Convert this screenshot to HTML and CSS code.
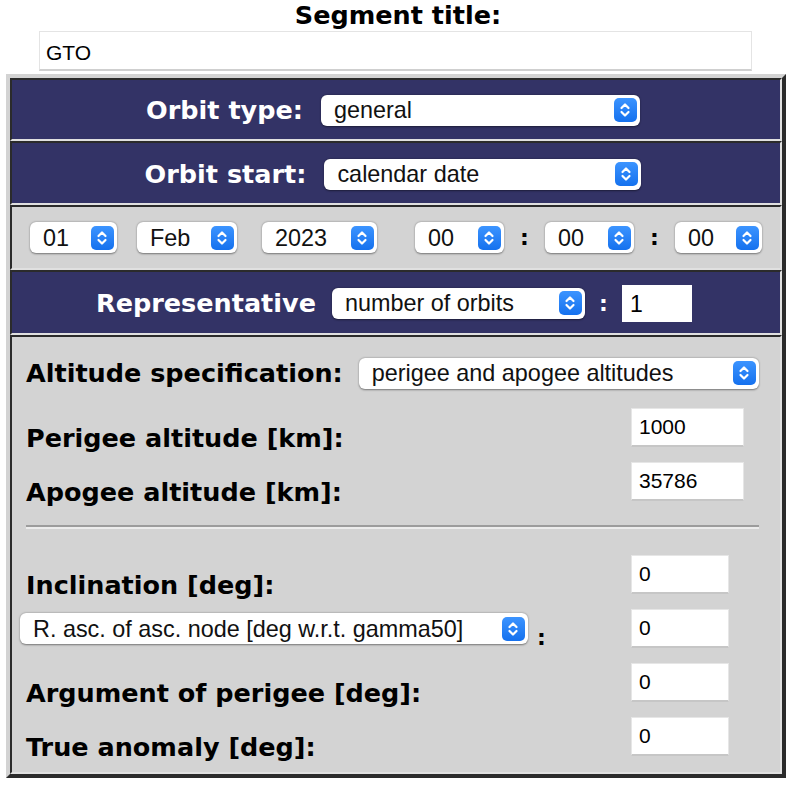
FILE: index.html
```html
<!DOCTYPE html>
<html>
<head>
<meta charset="utf-8">
<link rel="stylesheet" href="styles.css">
</head>
<body>
<div class="title">Segment title:</div>
<div class="title-input">GTO</div>
<div class="panel">
  <div class="cell navy row1">
    <span class="wlabel">Orbit type:</span>
    <div class="sel w-type"><span>general</span><span class="btn"><svg viewBox="0 0 22 24" width="22" height="24"><path d="M7.5 10 L11 6.5 L14.5 10 M7.5 14 L11 17.5 L14.5 14"/></svg></span></div>
  </div>
  <div class="cell navy row2">
    <span class="wlabel">Orbit start:</span>
    <div class="sel w-start"><span>calendar date</span><span class="btn"><svg viewBox="0 0 22 24" width="22" height="24"><path d="M7.5 10 L11 6.5 L14.5 10 M7.5 14 L11 17.5 L14.5 14"/></svg></span></div>
  </div>
  <div class="cell gray row3">
    <div class="sel w-day"><span>01</span><span class="btn"><svg viewBox="0 0 22 24" width="22" height="24"><path d="M7.5 10 L11 6.5 L14.5 10 M7.5 14 L11 17.5 L14.5 14"/></svg></span></div>
    <div class="sel w-mon"><span>Feb</span><span class="btn"><svg viewBox="0 0 22 24" width="22" height="24"><path d="M7.5 10 L11 6.5 L14.5 10 M7.5 14 L11 17.5 L14.5 14"/></svg></span></div>
    <div class="sel w-year"><span>2023</span><span class="btn"><svg viewBox="0 0 22 24" width="22" height="24"><path d="M7.5 10 L11 6.5 L14.5 10 M7.5 14 L11 17.5 L14.5 14"/></svg></span></div>
    <div class="sel w-hh"><span>00</span><span class="btn"><svg viewBox="0 0 22 24" width="22" height="24"><path d="M7.5 10 L11 6.5 L14.5 10 M7.5 14 L11 17.5 L14.5 14"/></svg></span></div>
    <span class="colon">:</span>
    <div class="sel w-mm"><span>00</span><span class="btn"><svg viewBox="0 0 22 24" width="22" height="24"><path d="M7.5 10 L11 6.5 L14.5 10 M7.5 14 L11 17.5 L14.5 14"/></svg></span></div>
    <span class="colon">:</span>
    <div class="sel w-ss"><span>00</span><span class="btn"><svg viewBox="0 0 22 24" width="22" height="24"><path d="M7.5 10 L11 6.5 L14.5 10 M7.5 14 L11 17.5 L14.5 14"/></svg></span></div>
  </div>
  <div class="cell navy row4">
    <span class="wlabel">Representative</span>
    <div class="sel w-rep"><span>number of orbits</span><span class="btn"><svg viewBox="0 0 22 24" width="22" height="24"><path d="M7.5 10 L11 6.5 L14.5 10 M7.5 14 L11 17.5 L14.5 14"/></svg></span></div>
    <span class="colon wcolon">:</span>
    <div class="rep-input">1</div>
  </div>
  <div class="cell gray row5">
    <div class="spec-row">
      <span class="blabel">Altitude specification:</span>
      <div class="sel w-spec"><span>perigee and apogee altitudes</span><span class="btn"><svg viewBox="0 0 22 24" width="22" height="24"><path d="M7.5 10 L11 6.5 L14.5 10 M7.5 14 L11 17.5 L14.5 14"/></svg></span></div>
    </div>
    <div class="frow first">
      <span class="blabel">Perigee altitude [km]:</span>
      <div class="num wide">1000</div>
    </div>
    <div class="frow">
      <span class="blabel">Apogee altitude [km]:</span>
      <div class="num wide">35786</div>
    </div>
    <div class="rule"></div>
    <div class="frow after-rule">
      <span class="blabel">Inclination [deg]:</span>
      <div class="num">0</div>
    </div>
    <div class="frow raan">
      <div class="raan-sel">
        <div class="sel w-raan"><span>R. asc. of asc. node [deg w.r.t. gamma50]</span><span class="btn"><svg viewBox="0 0 22 24" width="22" height="24"><path d="M7.5 10 L11 6.5 L14.5 10 M7.5 14 L11 17.5 L14.5 14"/></svg></span></div>
        <span class="bcolon">:</span>
      </div>
      <div class="num">0</div>
    </div>
    <div class="frow">
      <span class="blabel">Argument of perigee [deg]:</span>
      <div class="num">0</div>
    </div>
    <div class="frow">
      <span class="blabel">True anomaly [deg]:</span>
      <div class="num">0</div>
    </div>
  </div>
</div>
</body>
</html>
```
FILE: styles.css
```css
html, body { margin: 0; padding: 0; background: #fff; }
body { font-family: "DejaVu Sans", Verdana, sans-serif; color: #000; }

.title {
  text-align: center;
  font-weight: bold;
  font-size: 25.5px;
  line-height: 28px;
  padding-top: 1px;
}
.title-input {
  margin: 2px 0 0 39px;
  width: 713px;
  height: 40px;
  box-sizing: border-box;
  border: 1px solid #e4e4e4;
  border-bottom: 2px solid #cfcfcf;
  background: #fff;
  font: 21px "Liberation Sans", Arial, sans-serif;
  line-height: 41px;
  padding-left: 6px;
  color: #000;
}

.panel {
  margin: 3px 0 0 6px;
  width: 780px;
  box-sizing: border-box;
  border: 4px solid;
  border-color: #d3d3d3 #2b2b2b #2b2b2b #d3d3d3;
}
.cell {
  box-sizing: border-box;
  border: 2px solid;
  border-color: #2b2b2b #e0e0e0 #e0e0e0 #2b2b2b;
}
.navy { background: #333366; }
.gray { background: #d3d3d3; }

.row1, .row2, .row4 {
  display: flex;
  align-items: center;
  justify-content: center;
}
.row1 { height: 63px; padding-right: 6px; padding-top: 1px; }
.row2 { height: 64px; padding-right: 6px; padding-top: 2px; }
.row4 { height: 65px; padding-right: 4px; padding-top: 1px; }

.wlabel {
  color: #fff;
  font-weight: bold;
  font-size: 25.5px;
  margin-right: 18px;
}

.sel {
  display: flex;
  align-items: center;
  justify-content: space-between;
  box-sizing: border-box;
  height: 31px;
  background: #fff;
  border-radius: 6px;
  box-shadow: 0 0.5px 2px rgba(0,0,0,0.45);
  padding: 1px 3px 0 13px;
  font: 23.4px "Liberation Sans", Arial, sans-serif;
  color: #111;
  white-space: nowrap;
}
.sel .btn {
  display: flex;
  width: 23px;
  height: 24px;
  margin-top: -1px;
  border-radius: 5px;
  background: linear-gradient(#3c94ff, #1571ee);
  flex: none;
}
.sel svg path {
  fill: none;
  stroke: #fff;
  stroke-width: 2.2;
  stroke-linecap: round;
  stroke-linejoin: round;
}
.w-type { width: 319px; }
.w-start { width: 317px; }

.row3 {
  height: 65px;
  display: flex;
  align-items: center;
  padding-left: 18px;
}
.w-day { width: 87px; }
.w-mon { width: 100px; margin-left: 20px; }
.w-year { width: 115px; margin-left: 25px; }
.w-hh { width: 89px; margin-left: 38px; }
.w-mm { width: 89px; }
.w-ss { width: 87px; }
.colon {
  font-weight: bold;
  font-size: 22px;
  width: 41px;
  text-align: center;
}
.row4 .wlabel { margin-right: 16px; }
.w-rep { width: 253px; }
.wcolon { color: #fff; width: 37px; }
.rep-input {
  width: 70px;
  height: 37px;
  box-sizing: border-box;
  background: #fff;
  font: 23px "Liberation Sans", Arial, sans-serif;
  line-height: 38px;
  padding-left: 8px;
}

.row5 {
  height: 439px;
  padding: 20px 21px 0 14px;
}
.blabel {
  font-weight: bold;
  font-size: 25.5px;
  line-height: 28px;
  white-space: nowrap;
}
.spec-row {
  display: flex;
  align-items: center;
  height: 32px;
}
.spec-row .blabel { margin-right: 16px; }
.w-spec { width: 401px; }

.frow {
  display: flex;
  align-items: flex-end;
  justify-content: space-between;
  height: 39px;
  margin-top: 15px;
}
.frow.first { margin-top: 19px; }
.frow .blabel { margin-bottom: -5px; }
.num {
  width: 98px;
  height: 39px;
  box-sizing: border-box;
  background: #fff;
  border: 1px solid #e6e6e6;
  border-bottom: 2px solid #c6c6c6;
  font: 21px "Liberation Sans", Arial, sans-serif;
  line-height: 36px;
  padding-left: 7px;
  margin-right: 30px;
}
.num.wide { width: 113px; margin-right: 15px; }
.rule {
  margin: 24px 0 0 0;
  height: 2px;
  border-top: 2px solid #9c9c9c;
  background: #ececec;
}
.frow.after-rule { margin-top: 26px; }
.raan-sel {
  display: flex;
  align-items: flex-end;
  align-self: center;
}
.w-raan { width: 508px; margin-left: -6px; }
.bcolon {
  font-weight: bold;
  font-size: 22px;
  margin-left: 9px;
  margin-bottom: -6px;
}
```
